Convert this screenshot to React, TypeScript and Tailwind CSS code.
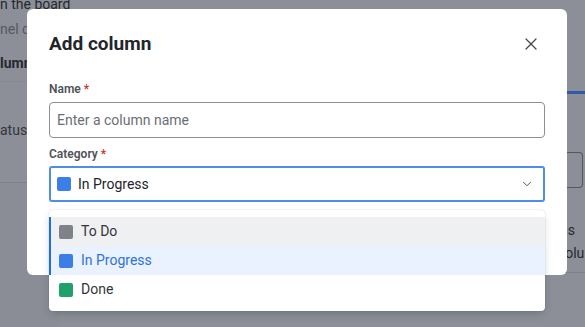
import { X, ChevronDown } from "lucide-react";

const options = [
  { name: "To Do", color: "bg-[#7f8289]", row: "bg-[#eef0f2] text-[#33353b]" },
  { name: "In Progress", color: "bg-[#3b7ee8]", row: "bg-[#e9f2fe] text-[#2f73d8]" },
  { name: "Done", color: "bg-[#22a06b]", row: "bg-white text-[#33353b]" },
];

function Backdrop() {
  // page behind the dialog, already dimmed
  return (
    <div className="absolute inset-0 flex bg-[#8c8f97] text-[#26282d]">
      <div className="w-[60px] flex flex-col text-[14px] leading-[20px]">
        <div className="h-[14px] -mt-[6px] whitespace-nowrap">n the board</div>
        <div className="h-[20px] mt-[11px] whitespace-nowrap text-[#55585f]">nel o</div>
        <div className="h-[20px] mt-[14px] font-bold whitespace-nowrap">lumn</div>
        <div className="h-px bg-[#868991] mt-[8px]" />
        <div className="mt-[38px] h-[20px] whitespace-nowrap text-[#33353b]">atuse</div>
        <div className="h-px bg-[#7d8088] mt-[42px]" />
        <div className="flex-1 bg-[#8a8d95]" />
      </div>
      <div className="flex-1" />
      <div className="w-[25px] flex flex-col pt-[91px] text-[14px] leading-[20px]">
        <div className="h-[3px] bg-[#2e5aa8]" />
        <div className="h-[58px]" />
        <div className="h-[36px] mr-[2px] rounded-r-[4px] border border-l-0 border-[#55585f]" />
        <div className="mt-[32px] whitespace-nowrap">ns</div>
        <div className="mt-[3px] whitespace-nowrap -ml-[2px]">solu</div>
        <div className="mt-[9px] h-px bg-[#7d8088]" />
      </div>
    </div>
  );
}

export default function App() {
  return (
    <div
      className="relative w-[585px] h-[327px] overflow-hidden"
      style={{ fontFamily: "Roboto, 'Noto Sans', sans-serif" }}
    >
      <Backdrop />

      <div className="absolute left-[27px] top-[9px] w-[540px] h-[266px] bg-white rounded-[6px] px-[22px] pt-[23px]">
        <div className="flex items-center justify-between">
          <h2 className="text-[19px] leading-[24px] font-bold text-[#22252a]">Add column</h2>
          <X className="w-[20px] h-[20px] mr-[4px] text-[#44474f]" strokeWidth={1.5} />
        </div>

        <div className="mt-[25px] text-[12px] leading-[16px] font-semibold text-[#505258]">
          Name <span className="text-[#c9372c]">*</span>
        </div>
        <div className="mt-[5px] h-[36px] w-[496px] rounded-[4px] border border-[#8c8f97] flex items-center px-[7px] text-[14px] text-[#6b6e76]">
          Enter a column name
        </div>

        <div className="mt-[8px] text-[12px] leading-[16px] font-semibold text-[#505258]">
          Category <span className="text-[#c9372c]">*</span>
        </div>
        <div className="mt-[4px] h-[36px] w-[496px] rounded-[3px] border-2 border-[#4c8ee8] flex items-center pl-[6px] pr-[9px] text-[14px] text-[#22252a]">
          <span className="w-[14px] h-[14px] rounded-[2px] bg-[#3b7ee8]" />
          <span className="ml-[7px] flex-1">In Progress</span>
          <ChevronDown className="w-[14px] h-[14px] text-[#44474f]" strokeWidth={1.6} />
        </div>
      </div>

      <div className="absolute left-[49px] top-[210px] w-[496px] bg-white rounded-[4px] py-[7px] shadow-[0_4px_8px_-2px_rgba(9,30,66,0.25),0_0_1px_rgba(9,30,66,0.31)]">
        <div className="flex flex-col">
          {options.map((o, i) => (
            <div
              key={o.name}
              className={`h-[29px] flex items-center pl-[8px] text-[14px] ${o.row} ${i < 2 ? "border-l-2 border-[#1d6fe0]" : "border-l-2 border-transparent"}`}
            >
              <span className={`w-[14px] h-[14px] rounded-[2px] ${o.color}`} />
              <span className="ml-[8px]">{o.name}</span>
            </div>
          ))}
        </div>
      </div>
    </div>
  );
}
